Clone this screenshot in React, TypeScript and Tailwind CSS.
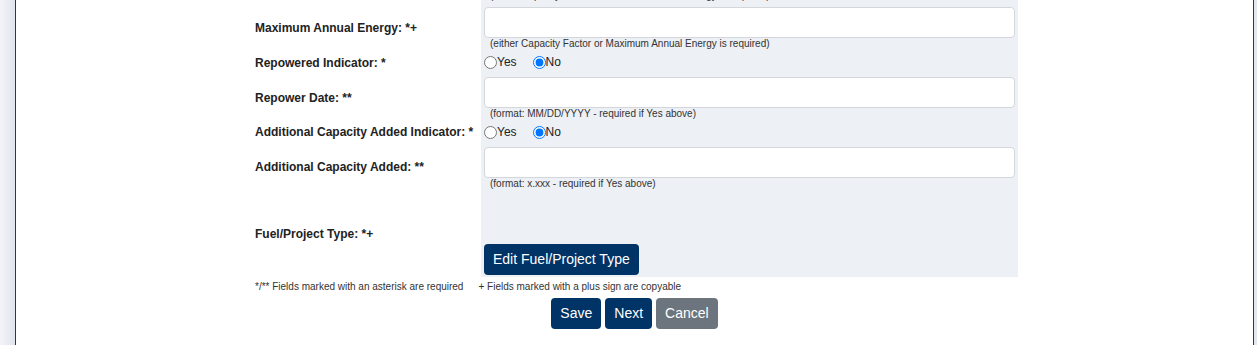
import React from 'react';

const Label = ({ children }: { children: React.ReactNode }) => (
  <div className="flex items-center pb-[2px] text-[12px] font-bold text-[#222]">{children}</div>
);

const Help = ({ children }: { children: React.ReactNode }) => (
  <div className="pl-[6px] text-[10px] leading-[12px] text-[#333]">{children}</div>
);

const TextField = () => (
  <input
    type="text"
    className="block h-[31px] w-full rounded-[4px] border border-[#d3d6db] bg-white px-2 text-[12px] outline-none"
  />
);

const YesNo = ({ name }: { name: string }) => (
  <div className="flex items-center text-[12px] leading-[16px] text-[#222]">
    <label className="flex items-center">
      <input type="radio" name={name} className="m-0 h-[13px] w-[13px]" />
      <span>Yes</span>
    </label>
    <label className="ml-[16px] flex items-center">
      <input type="radio" name={name} defaultChecked className="m-0 h-[13px] w-[13px]" />
      <span>No</span>
    </label>
  </div>
);

const App = () => {
  return (
    <div className="flex h-[345px] overflow-hidden bg-white font-['Liberation_Sans',Arial,sans-serif]">
      <div className="w-[15px] bg-linear-to-r from-[#f3f4f9] to-[#e1e4ed]" />
      <div className="w-px bg-[#1c3a6e]" />

      <main className="flex-1">
        <div className="mx-auto -mt-[10px] w-[767px] pl-[4px]">
          <div className="grid grid-cols-[226px_537px]">
            {/* tail of previous field */}
            <div />
            <div className="bg-[#edf0f5] px-[3px] pb-[3px]">
              <Help>(either Capacity Factor or Maximum Annual Energy is required)</Help>
            </div>

            {/* Maximum Annual Energy */}
            <Label>Maximum Annual Energy: *+</Label>
            <div className="bg-[#edf0f5] px-[3px] py-[2px]">
              <TextField />
              <Help>(either Capacity Factor or Maximum Annual Energy is required)</Help>
            </div>

            {/* Repowered Indicator */}
            <Label>Repowered Indicator: *</Label>
            <div className="bg-[#edf0f5] px-[3px] pt-[2px] pb-[5px]">
              <YesNo name="repowered" />
            </div>

            {/* Repower Date */}
            <Label>Repower Date: **</Label>
            <div className="bg-[#edf0f5] px-[3px] py-[2px]">
              <TextField />
              <Help>(format: MM/DD/YYYY - required if Yes above)</Help>
            </div>

            {/* Additional Capacity Added Indicator */}
            <Label>Additional Capacity Added Indicator: *</Label>
            <div className="bg-[#edf0f5] px-[3px] pt-[2px] pb-[4px]">
              <YesNo name="addcap" />
            </div>

            {/* Additional Capacity Added */}
            <Label>Additional Capacity Added: **</Label>
            <div className="bg-[#edf0f5] px-[3px] pt-[3px] pb-[2px]">
              <TextField />
              <Help>(format: x.xxx - required if Yes above)</Help>
            </div>

            {/* Fuel / Project Type */}
            <Label>Fuel/Project Type: *+</Label>
            <div className="bg-[#edf0f5] px-[3px] pt-[52px] pb-[2px]">
              <button className="h-[31px] rounded-[4px] bg-[#003366] px-[9px] text-[14px] text-white">
                Edit Fuel/Project Type
              </button>
            </div>
          </div>

          <div className="mt-[4px] flex text-[10px] leading-[12px] text-[#333]">
            <span>*/** Fields marked with an asterisk are required</span>
            <span className="ml-[15px]">+ Fields marked with a plus sign are copyable</span>
          </div>
        </div>

        <div className="mt-[5px] flex justify-center gap-[4px]">
          <button className="h-[31px] rounded-[4px] bg-[#003366] px-[9px] text-[14px] text-white">Save</button>
          <button className="h-[31px] rounded-[4px] bg-[#003366] px-[9px] text-[14px] text-white">Next</button>
          <button className="h-[31px] rounded-[4px] bg-[#6c757d] px-[9px] text-[14px] text-white">Cancel</button>
        </div>
      </main>

      <div className="w-px bg-[#1c3a6e]" />
      <div className="w-[3px] bg-[#e4e7ef]" />
    </div>
  );
};

export default App;
